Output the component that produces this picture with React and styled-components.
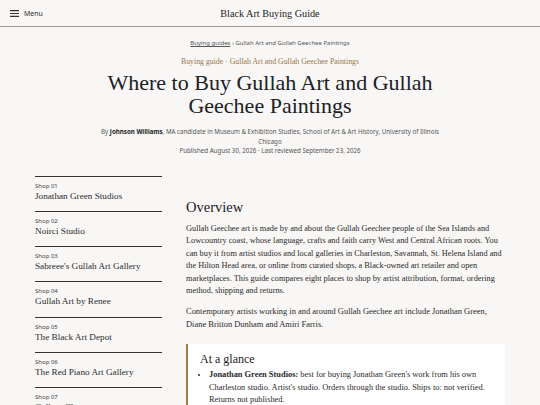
import React from 'react';
import styled, { createGlobalStyle } from 'styled-components';

const GlobalStyle = createGlobalStyle`
    html, body {
        margin: 0;
        padding: 0;
        background: #f8f7f5;
        color: #1f2328;
        font-family: Georgia, "Liberation Serif", serif;
    }
    * { box-sizing: border-box; }
`;

const HeaderBar = styled.header`
    height: 27px;
    border-bottom: 1px solid #9a9a9a;
    display: grid;
    grid-template-columns: 1fr auto 1fr;
    align-items: center;
    padding: 0 10px;
`;

const MenuButton = styled.button`
    display: flex;
    align-items: center;
    gap: 5px;
    background: none;
    border: none;
    padding: 0;
    font-family: "Noto Sans", sans-serif;
    font-size: 7px;
    color: #333;
    justify-self: start;
`;

const SiteTitle = styled.div`
    font-size: 10.2px;
    color: #222;
`;

const Hero = styled.section`
    text-align: center;
    padding: 12px 40px 0;
`;

const Crumbs = styled.nav`
    font-family: "Noto Sans", sans-serif;
    font-size: 6px;
    color: #555;
    a { color: #555; text-decoration: underline; }
`;

const Eyebrow = styled.div`
    margin-top: 10px;
    font-size: 7.8px;
    color: #9a7445;
`;

const Title = styled.h1`
    margin: 5px auto 0;
    max-width: 360px;
    font-weight: 400;
    font-size: 22px;
    line-height: 23px;
    color: #1c2026;
`;

const Byline = styled.p`
    margin: 10px auto 0;
    max-width: 342px;
    font-family: "Noto Sans", sans-serif;
    font-size: 6.2px;
    line-height: 9.5px;
    color: #555;
    b { color: #222; }
`;

const Layout = styled.div`
    width: 470px;
    margin: 20px auto 0;
    display: grid;
    grid-template-columns: 127px 1fr;
    column-gap: 24px;
`;

const ShopList = styled.ul`
    list-style: none;
    margin: 0;
    padding: 0;
`;

const ShopItem = styled.li`
    border-top: 1.5px solid #333;
    height: 35.3px;
    padding-top: 5px;
`;

const ShopLabel = styled.div`
    font-family: "Noto Sans", sans-serif;
    font-size: 6px;
    color: #444;
`;

const ShopName = styled.div`
    margin-top: 1px;
    font-size: 9.2px;
    color: #2a2a2a;
`;

const Main = styled.main`
    padding-top: 23px;
`;

const SectionTitle = styled.h2`
    margin: 0;
    font-weight: 400;
    font-size: 14.5px;
    color: #1c2026;
`;

const Para = styled.p`
    margin: 7px 0 0;
    font-size: ${p => p.$size || 8.3}px;
    line-height: 12.6px;
    color: #2a2a2a;
`;

const Glance = styled.aside`
    margin-top: 14px;
    background: #fff;
    border-left: 2px solid #a07c47;
    padding: 8px 10px 4px 12px;
`;

const GlanceTitle = styled.h3`
    margin: 0;
    font-weight: 400;
    font-size: 12px;
    line-height: 15px;
    color: #222;
`;

const GlanceList = styled.ul`
    margin: 2px 0 0;
    padding-left: 9px;
    font-size: 8.4px;
    line-height: 12.6px;
    color: #2a2a2a;
    li::marker { font-size: 7px; }
`;

const shops = [
    'Jonathan Green Studios',
    'Noirci Studio',
    "Sabreee's Gullah Art Gallery",
    'Gullah Art by Renee',
    'The Black Art Depot',
    'The Red Piano Art Gallery',
    'Gallery Chuma',
];

const MenuIcon = () => (
    <svg width="9" height="7" viewBox="0 0 9 7">
        <path d="M0 0.6H9M0 3.5H9M0 6.4H9" stroke="#333" strokeWidth="1.1" />
    </svg>
);

const App = () => (
    <>
        <GlobalStyle />
        <HeaderBar>
            <MenuButton><MenuIcon />Menu</MenuButton>
            <SiteTitle>Black Art Buying Guide</SiteTitle>
            <span />
        </HeaderBar>
        <Hero>
            <Crumbs><a href="#">Buying guides</a> › Gullah Art and Gullah Geechee Paintings</Crumbs>
            <Eyebrow>Buying guide · Gullah Art and Gullah Geechee Paintings</Eyebrow>
            <Title>Where to Buy Gullah Art and Gullah Geechee Paintings</Title>
            <Byline>
                By <b>Johnson Williams</b>, MA candidate in Museum &amp; Exhibition Studies, School of Art &amp; Art History, University of Illinois Chicago
                <br />Published August 30, 2026 · Last reviewed September 23, 2026
            </Byline>
        </Hero>
        <Layout>
            <ShopList>
                {shops.map((name, i) => (
                    <ShopItem key={name}>
                        <ShopLabel>Shop 0{i + 1}</ShopLabel>
                        <ShopName>{name}</ShopName>
                    </ShopItem>
                ))}
            </ShopList>
            <Main>
                <SectionTitle>Overview</SectionTitle>
                <Para>
                    Gullah Geechee art is made by and about the Gullah Geechee people of the Sea Islands and Lowcountry coast, whose language, crafts and faith carry West and Central African roots. You can buy it from artist studios and local galleries in Charleston, Savannah, St. Helena Island and the Hilton Head area, or online from curated shops, a Black-owned art retailer and open marketplaces. This guide compares eight places to shop by artist attribution, format, ordering method, shipping and returns.
                </Para>
                <Para $size={8.45}>
                    Contemporary artists working in and around Gullah Geechee art include Jonathan Green, Diane Britton Dunham and Amiri Farris.
                </Para>
                <Glance>
                    <GlanceTitle>At a glance</GlanceTitle>
                    <GlanceList>
                        <li><b>Jonathan Green Studios:</b> best for buying Jonathan Green's work from his own Charleston studio. Artist's studio. Orders through the studio. Ships to: not verified. Returns not published.</li>
                    </GlanceList>
                </Glance>
            </Main>
        </Layout>
    </>
);

export default App;
